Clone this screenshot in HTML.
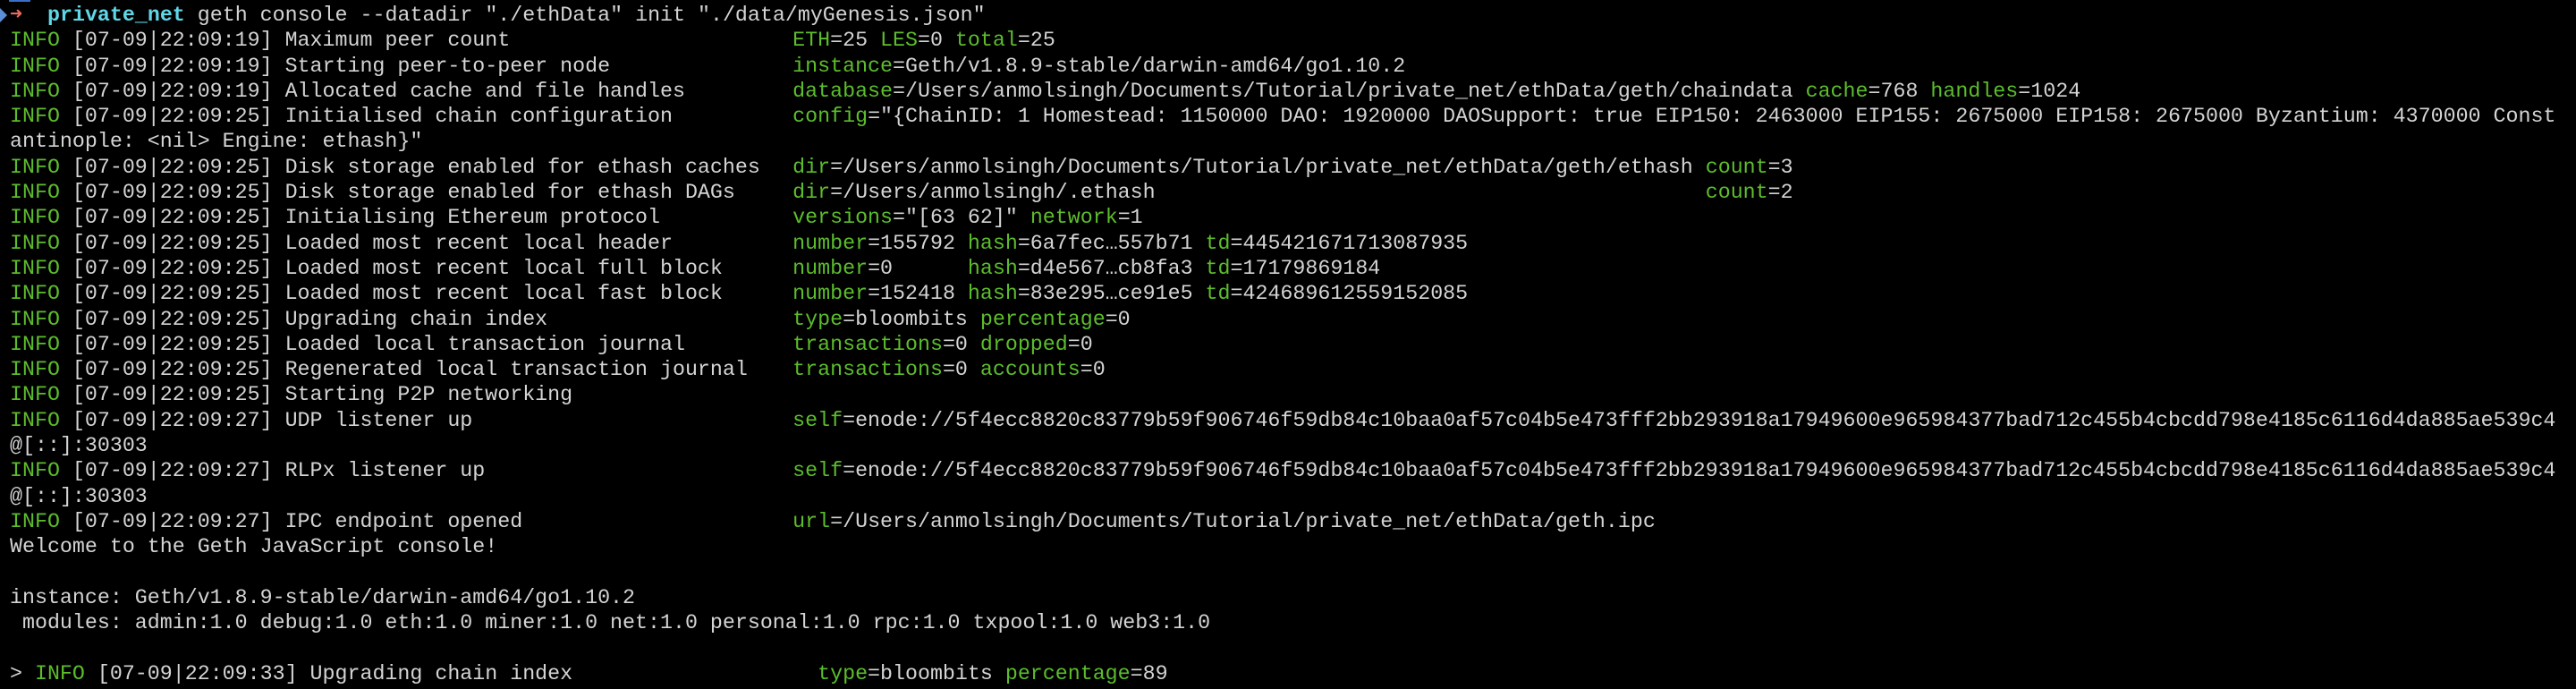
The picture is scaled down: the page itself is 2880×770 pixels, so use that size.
<!DOCTYPE html>
<html><head><meta charset="utf-8">
<style>
html,body{margin:0;padding:0;background:#000;}
body{width:2880px;height:770px;overflow:hidden;position:relative;}
.t{position:absolute;left:11px;top:3px;font-family:"Liberation Mono",monospace;font-size:23.3px;line-height:28.3px;color:#d4d4d4;}
.t div{white-space:pre;height:28.3px;}
.g{color:#5cbd2c;}
.m{display:inline-block;width:62.6ch;}
.m2{display:inline-block;width:64.6ch;}
.d{display:inline-block;width:72ch;}
.c{color:#5fd7e8;font-weight:bold;}
.r{color:#ec6a5e;}
.tri{position:absolute;left:0;top:9px;width:0;height:0;border-top:8px solid transparent;border-bottom:8px solid transparent;border-left:8px solid #5b8fd8;}
.bar{position:absolute;left:10px;top:0;width:24px;height:2px;background:#3a6fc8;}
</style></head><body>
<div class="tri"></div><div class="bar"></div>
<div class="t">
<div><span class="r">➜</span>  <span class="c">private_net</span> geth console --datadir "./ethData" init "./data/myGenesis.json"</div>
<div><span class="m"><span class="g">INFO</span> [07-09|22:09:19] Maximum peer count</span><span class="g">ETH</span>=25 <span class="g">LES</span>=0 <span class="g">total</span>=25</div>
<div><span class="m"><span class="g">INFO</span> [07-09|22:09:19] Starting peer-to-peer node</span><span class="g">instance</span>=Geth/v1.8.9-stable/darwin-amd64/go1.10.2</div>
<div><span class="m"><span class="g">INFO</span> [07-09|22:09:19] Allocated cache and file handles</span><span class="g">database</span>=/Users/anmolsingh/Documents/Tutorial/private_net/ethData/geth/chaindata <span class="g">cache</span>=768 <span class="g">handles</span>=1024</div>
<div><span class="m"><span class="g">INFO</span> [07-09|22:09:25] Initialised chain configuration</span><span class="g">config</span>="{ChainID: 1 Homestead: 1150000 DAO: 1920000 DAOSupport: true EIP150: 2463000 EIP155: 2675000 EIP158: 2675000 Byzantium: 4370000 Const</div>
<div>antinople: &lt;nil&gt; Engine: ethash}"</div>
<div><span class="m"><span class="g">INFO</span> [07-09|22:09:25] Disk storage enabled for ethash caches</span><span class="d"><span class="g">dir</span>=/Users/anmolsingh/Documents/Tutorial/private_net/ethData/geth/ethash</span> <span class="g">count</span>=3</div>
<div><span class="m"><span class="g">INFO</span> [07-09|22:09:25] Disk storage enabled for ethash DAGs</span><span class="d"><span class="g">dir</span>=/Users/anmolsingh/.ethash</span> <span class="g">count</span>=2</div>
<div><span class="m"><span class="g">INFO</span> [07-09|22:09:25] Initialising Ethereum protocol</span><span class="g">versions</span>="[63 62]" <span class="g">network</span>=1</div>
<div><span class="m"><span class="g">INFO</span> [07-09|22:09:25] Loaded most recent local header</span><span class="g">number</span>=155792 <span class="g">hash</span>=6a7fec…557b71 <span class="g">td</span>=445421671713087935</div>
<div><span class="m"><span class="g">INFO</span> [07-09|22:09:25] Loaded most recent local full block</span><span class="g">number</span>=0      <span class="g">hash</span>=d4e567…cb8fa3 <span class="g">td</span>=17179869184</div>
<div><span class="m"><span class="g">INFO</span> [07-09|22:09:25] Loaded most recent local fast block</span><span class="g">number</span>=152418 <span class="g">hash</span>=83e295…ce91e5 <span class="g">td</span>=424689612559152085</div>
<div><span class="m"><span class="g">INFO</span> [07-09|22:09:25] Upgrading chain index</span><span class="g">type</span>=bloombits <span class="g">percentage</span>=0</div>
<div><span class="m"><span class="g">INFO</span> [07-09|22:09:25] Loaded local transaction journal</span><span class="g">transactions</span>=0 <span class="g">dropped</span>=0</div>
<div><span class="m"><span class="g">INFO</span> [07-09|22:09:25] Regenerated local transaction journal</span><span class="g">transactions</span>=0 <span class="g">accounts</span>=0</div>
<div><span class="g">INFO</span> [07-09|22:09:25] Starting P2P networking</div>
<div><span class="m"><span class="g">INFO</span> [07-09|22:09:27] UDP listener up</span><span class="g">self</span>=enode://5f4ecc8820c83779b59f906746f59db84c10baa0af57c04b5e473fff2bb293918a17949600e965984377bad712c455b4cbcdd798e4185c6116d4da885ae539c4</div>
<div>@[::]:30303</div>
<div><span class="m"><span class="g">INFO</span> [07-09|22:09:27] RLPx listener up</span><span class="g">self</span>=enode://5f4ecc8820c83779b59f906746f59db84c10baa0af57c04b5e473fff2bb293918a17949600e965984377bad712c455b4cbcdd798e4185c6116d4da885ae539c4</div>
<div>@[::]:30303</div>
<div><span class="m"><span class="g">INFO</span> [07-09|22:09:27] IPC endpoint opened</span><span class="g">url</span>=/Users/anmolsingh/Documents/Tutorial/private_net/ethData/geth.ipc</div>
<div>Welcome to the Geth JavaScript console!</div>
<div> </div>
<div>instance: Geth/v1.8.9-stable/darwin-amd64/go1.10.2</div>
<div> modules: admin:1.0 debug:1.0 eth:1.0 miner:1.0 net:1.0 personal:1.0 rpc:1.0 txpool:1.0 web3:1.0</div>
<div> </div>
<div><span class="m2">&gt; <span class="g">INFO</span> [07-09|22:09:33] Upgrading chain index</span><span class="g">type</span>=bloombits <span class="g">percentage</span>=89</div>
</div>
</body></html>
